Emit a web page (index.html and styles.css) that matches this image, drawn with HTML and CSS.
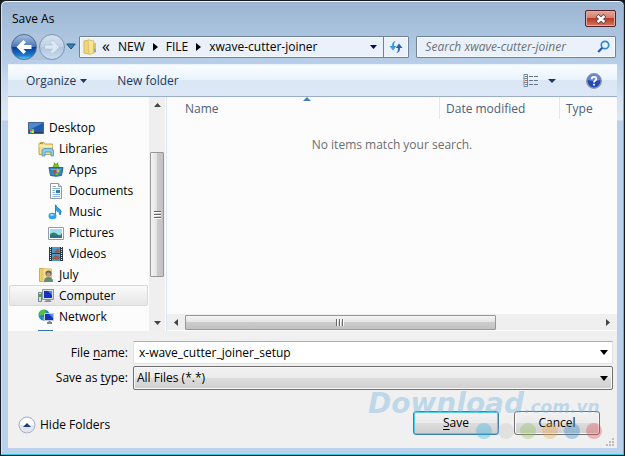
FILE: index.html
```html
<!DOCTYPE html>
<html lang="en">
<head>
  <meta charset="UTF-8" />
  <meta name="viewport" content="width=device-width, initial-scale=1.0" />
  <title>Save As</title>
  <link rel="stylesheet" href="styles.css">
</head>
<body>
  <form class="dialog" onsubmit="return false;">
    <header class="titlebar">
      <h1>Save As</h1>
      <button class="close" type="button" aria-label="Close">
        <svg width="12" height="10" viewBox="0 0 12 10"><path d="M2 1.500 10 8.500M10 1.500 2 8.500" stroke="#5b4650" stroke-width="4.200"/><path d="M2.500 2 9.500 8M9.500 2 2.500 8" stroke="#fff" stroke-width="2.400"/></svg>
      </button>
    </header>

    <nav class="navbar">
      <div class="travel">
        <button class="round back" type="button" aria-label="Back">
          <svg width="16" height="16" viewBox="0 0 16 16"><path d="M7.500 1 .5 8 7.500 15 10 12.700 7.500 10H15.500V6H7.500L10 3.300z" fill="#fff"/></svg>
        </button>
        <button class="round forward" type="button" aria-label="Forward">
          <svg width="16" height="16" viewBox="0 0 16 16"><path d="M8.500 1 15.500 8 8.500 15 6 12.700 8.500 10H.5V6H8.500L6 3.300z" fill="#dce8f3" stroke="#a9bfd4" stroke-width=".6"/></svg>
        </button>
      </div>
      <button class="plain recent" type="button" aria-label="Recent pages">
        <svg width="10" height="7" viewBox="0 0 10 7"><path d="M.8 1H9.200L5 6z" fill="#2f87b5" stroke="#1c4c78"/></svg>
      </button>
      <div class="address">
        <svg class="folder" width="14" height="16" viewBox="0 0 14 16"><path d="M1 2 6 1V15L1 14z" fill="#f0d475" stroke="#d8b860"/><path d="M5 1 11 2V14L6 15.500z" fill="#f6e394" stroke="#dfc56c"/><path d="M10 4H13V13L10 14.500z" fill="#e5c05a"/><path d="M12 10V13" stroke="#4fb2ea" stroke-width="1.500"/></svg>
        <span class="crumb-more">«</span>
        <a href="#">NEW</a>
        <svg class="chevron" width="5" height="8" viewBox="0 0 5 8"><path d="M0 0 5 4 0 8z"/></svg>
        <a href="#">FILE</a>
        <svg class="chevron" width="5" height="8" viewBox="0 0 5 8"><path d="M0 0 5 4 0 8z"/></svg>
        <a href="#">xwave-cutter-joiner</a>
        <button class="plain history" type="button" aria-label="Previous locations">
          <svg width="7" height="4" viewBox="0 0 7 4"><path d="M0 0H7L3.500 4z" fill="#000060"/></svg>
        </button>
        <button class="plain refresh" type="button" aria-label="Refresh">
          <svg width="14" height="14" viewBox="0 0 14 14"><path d="M6.500 1Q3 1.500 3 6H.5L4 10.500 7.300 6H5Q4.500 3 6.500 1z" fill="#3a9bd8"/><path d="M7.500 13Q11 12.500 11 8H13.500L10 3.500 6.700 8H9Q9.500 11 7.500 13z" fill="#2b62b2"/></svg>
        </button>
      </div>
      <div class="search">
        <input type="text" placeholder="Search xwave-cutter-joiner" aria-label="Search xwave-cutter-joiner" />
        <svg width="13" height="13" viewBox="0 0 13 13"><circle cx="8" cy="5" r="3.700" fill="#e4f3fc" stroke="#3089cd" stroke-width="1.700"/><path d="M5.300 7.700 1.200 12" stroke="#285aa8" stroke-width="2.200"/></svg>
      </div>
    </nav>

    <div class="toolbar">
      <button class="plain" type="button">Organize <svg width="7" height="4" viewBox="0 0 7 4"><path d="M0 0H7L3.500 4z" fill="#1e395b"/></svg></button>
      <button class="plain new-folder" type="button">New folder</button>
      <button class="plain views" type="button" aria-label="Change your view">
        <svg width="16" height="13" viewBox="0 0 16 13"><path d="M1 .5H4.500V12.500H1zM1 4.500H4.500M1 8.500H4.500" fill="#fff" stroke="#7a8595"/><path d="M2 2.500H4M2 10.500H4" stroke="#4a80c0"/><path d="M2 6.500H4" stroke="#d0572d"/><path d="M6 2.500H10M11 2.500H15M6 6.500H10M11 6.500H15M6 10.500H10M11 10.500H15" stroke="#65768e"/></svg>
        <svg width="8" height="4" viewBox="0 0 8 4"><path d="M0 0H8L4 4z" fill="#1e395b"/></svg>
      </button>
      <button class="plain" type="button" aria-label="Help">
        <svg width="16" height="16" viewBox="0 0 16 16"><circle cx="8" cy="8" r="7.200" fill="#2349b8" stroke="#8c929e" stroke-width="1.500"/><path d="M2 7A6 6 0 0 1 14 7Q8 9 2 7z" fill="#6688dd"/><path d="M5.700 6.200Q5.800 3.900 8 3.900 10.300 3.900 10.300 6 10.300 7.100 8.800 7.900 8 8.400 8 9.500M8 10.700V12.500" fill="none" stroke="#fff" stroke-width="1.800"/></svg>
      </button>
    </div>

    <main class="browser">
      <ul class="tree">
        <li><a href="#">
          <svg width="16" height="16" viewBox="0 0 16 16"><path d="M.5 2.500H15.500V13.500H.5z" fill="#235ba8" stroke="#42658f"/><path d="M1 3H15L1 10z" fill="#4f89d0"/><path d="M1 12.500H15" stroke="#243b60"/><path d="M2 9H4V11H2z" fill="#e85c3b"/><path d="M4 9H6V11H4z" fill="#79c94c"/><path d="M2 11H4V13H2z" fill="#53c5f2"/><path d="M4 11H6V13H4z" fill="#f3d14f"/></svg>
          Desktop</a></li>
        <li class="level-1"><a href="#">
          <svg width="16" height="16" viewBox="0 0 16 16"><path d="M1 2.500 2 1.500H6L7 3H14.500V13.500H1z" fill="#f3df91" stroke="#c6a550"/><path d="M1 5H15" stroke="#fff4c4"/><path d="M2 2.500H5" stroke="#5eb946"/><path d="M4 15V9L6 7.500H13.500L15.500 9V15H13V11H7V15z" fill="#87cced" stroke="#4a96c4" stroke-width=".8"/></svg>
          Libraries</a></li>
        <li class="level-2"><a href="#">
          <svg width="16" height="16" viewBox="0 0 16 16"><path d="M4.500 6Q4.500 1.500 8 1.500T11.500 6z" fill="#8cbb2d"/><path d="M6 .5 7 3M10 .5 9 3" stroke="#55821e"/><path d="M1 5.500H15L13.500 13.500Q8 15 2.500 13.500z" fill="#3288be" stroke="#1f699e"/><path d="M3 7.500H13" stroke="#62b0d8"/><circle cx="7" cy="9.500" r="1.800" fill="#c84432"/><circle cx="10" cy="9" r="1.500" fill="#f0c23d"/><circle cx="9" cy="12" r="1.300" fill="#82b43b"/></svg>
          Apps</a></li>
        <li class="level-2"><a href="#">
          <svg width="16" height="16" viewBox="0 0 16 16"><path d="M2.500.5H10.500L13.500 3.500V15.500H2.500z" fill="#fff" stroke="#8c9bab"/><path d="M10.500.5V3.500H13.500" fill="#dce7f0" stroke="#8c9bab"/><path d="M4.500 3.500H8M4.500 5.500H12M4.500 7.500H7M4.500 9.500H7M4.500 11.500H12M4.500 13.500H12" stroke="#8db4d5"/><path d="M8 7H12V10H8z" fill="#247fbd"/></svg>
          Documents</a></li>
        <li class="level-2"><a href="#">
          <svg width="16" height="16" viewBox="0 0 16 16"><path d="M7.500 12V.8Q8.500 4 11.500 5 14.500 7 12 11 12 7.500 8.500 6.500" fill="#3ba2dd" stroke="#2783c5"/><ellipse cx="4.500" cy="12" rx="4" ry="3.300" fill="#2fa3e4"/><ellipse cx="4" cy="11" rx="2" ry="1" fill="#9ddcf8"/></svg>
          Music</a></li>
        <li class="level-2"><a href="#">
          <svg width="16" height="16" viewBox="0 0 16 16"><path d="M.5 2.500H15.500V14.500H.5z" fill="#fff" stroke="#919eaa"/><path d="M2 4H14V13H2z" fill="#9edaf1"/><path d="M2 9Q6 6 9 9T14 8V13H2z" fill="#34835a"/><path d="M2 11Q7 8 14 12V13H2z" fill="#2a718d"/></svg>
          Pictures</a></li>
        <li class="level-2"><a href="#">
          <svg width="16" height="16" viewBox="0 0 16 16"><path d="M1 1H15V15H1z" fill="#273845"/><path d="M4 1H12V7H4zM4 8H12V15H4z" fill="#4d9cc7"/><path d="M4 3 7 5 10 2 12 6 8 7zM4 13 7 9 12 11 10 14z" fill="#9a5a49"/><path d="M2.500 1V15M13.500 1V15" stroke="#e5eef4" stroke-dasharray="1 1"/></svg>
          Videos</a></li>
        <li class="level-1"><a href="#">
          <svg width="16" height="16" viewBox="0 0 16 16"><path d="M1.500 1.500H6V14.500H1.500z" fill="#ebcc70" stroke="#d0ac50"/><path d="M5 1.500 13.500 2V14L5 15z" fill="#f4df96" stroke="#dfc476"/><circle cx="10.500" cy="6.500" r="3" fill="#6a6454"/><circle cx="10.500" cy="7.500" r="2" fill="#c49c7b"/><path d="M6 15Q6 10 10.500 10T15 15z" fill="#668b77"/></svg>
          July</a></li>
        <li class="level-1 selected"><a href="#">
          <svg width="16" height="16" viewBox="0 0 16 16"><path d="M.5 4.500H3.500V13.500H.5z" fill="#d4dbdf" stroke="#78858e"/><path d="M2 6V9" stroke="#42a648" stroke-width="2"/><path d="M4.500 1.500H15.500V11.500H4.500z" fill="#d9dfe5" stroke="#8b959f"/><path d="M6 3H14V10H6z" fill="#1631bd"/><path d="M10 3H14V7z" fill="#5d82ed"/><path d="M8 12H12L14 14H6z" fill="#89949e"/></svg>
          Computer</a></li>
        <li class="level-1"><a href="#">
          <svg width="16" height="16" viewBox="0 0 16 16"><circle cx="6" cy="6" r="5.500" fill="#2582c5"/><path d="M2 2Q7-1 8 3L5 6 1 7zM4 8 8 9 6 12z" fill="#54bd47"/><path d="M6.500 4.500H15.500V11.500H6.500z" fill="#1631bd" stroke="#c2ccd6"/><path d="M11 5H15V9z" fill="#688aec"/><path d="M9 14H14M11.500 12V14" stroke="#788694" stroke-width="2"/></svg>
          Network</a></li>
        <li class="level-1"><a href="#" aria-label="Control Panel">
          <svg width="16" height="16" viewBox="0 0 16 16"><path d="M0 0H15V14H0z" fill="#3475af"/></svg>
        </a></li>
      </ul>
      <div class="scroll scroll-y">
        <svg width="7" height="4" viewBox="0 0 7 4"><path d="M0 4H7L3.500 0z"/></svg>
        <div class="track"><div class="thumb"><i></i><i></i><i></i></div></div>
        <svg width="7" height="4" viewBox="0 0 7 4"><path d="M0 0H7L3.500 4z"/></svg>
      </div>
      <section class="files">
        <div class="columns">
          <span class="col-name">Name <svg class="sort" width="8" height="4" viewBox="0 0 8 4"><path d="M0 4H8L4 0z" fill="#4583a8"/></svg></span>
          <span class="col-date">Date modified</span>
          <span class="col-type">Type</span>
        </div>
        <p class="empty">No items match your search.</p>
        <div class="scroll scroll-x">
          <svg width="4" height="7" viewBox="0 0 4 7"><path d="M4 0V7L0 3.500z"/></svg>
          <div class="track"><div class="thumb"><i></i><i></i><i></i></div></div>
          <svg width="4" height="7" viewBox="0 0 4 7"><path d="M0 0V7L4 3.500z"/></svg>
        </div>
      </section>
    </main>

    <footer class="footer">
      <div class="field">
        <label for="fileName">File <u>n</u>ame:</label>
        <div class="combo">
          <input type="text" id="fileName" value="x-wave_cutter_joiner_setup" />
          <svg width="8" height="5" viewBox="0 0 8 5"><path d="M0 0H8L4 5z"/></svg>
        </div>
      </div>
      <div class="field">
        <label for="fileType">Save as <u>t</u>ype:</label>
        <div class="combo combo-type">
          <select id="fileType"><option>All Files (*.*)</option></select>
          <svg width="8" height="5" viewBox="0 0 8 5"><path d="M0 0H8L4 5z"/></svg>
        </div>
      </div>
      <div class="actions">
        <button class="plain hide" type="button">
          <svg width="18" height="18" viewBox="0 0 18 18"><circle cx="9" cy="9" r="8" fill="#e0e6f0" stroke="#a9b3c5"/><path d="M2 9A7 7 0 0 1 16 9z" fill="#fff"/><path d="M5 11H13L9 7z" fill="#1f3d78"/></svg>
          Hide Folders
        </button>
        <button class="btn btn-save" type="submit"><u>S</u>ave</button>
        <button class="btn" type="button">Cancel</button>
        <div class="watermark">
          <div class="brand">Download<small>.com.vn</small></div>
          <div class="dots"><i class="cyan"></i><i class="grey"></i><i class="green"></i><i class="orange"></i><i class="blue"></i><i class="red"></i></div>
        </div>
      </div>
      <svg class="grip" width="8" height="8" viewBox="0 0 8 8"><path d="M6 0H8V2H6zM3 3H5V5H3zM6 3H8V5H6zM0 6H2V8H0zM3 6H5V8H3zM6 6H8V8H6z" fill="#bcbcbc"/></svg>
    </footer>
  </form>
</body>
</html>
```

FILE: styles.css
```css
:root {
  --glass: #b9d1ea;
  --text: #000;
  --navy: #1e395b;
  --pane: #fcfcfc;
  --footer: #f0f0f0;
}
* {
  box-sizing: border-box;
}
body {
  margin: 0;
  background: #16191d;
  font-family: 'Open Sans', 'Noto Sans', sans-serif;
  font-size: 12px;
  line-height: 16px;
  color: var(--text);
}
button, input, select {
  font: inherit;
  color: inherit;
  margin: 0;
}
a {
  color: inherit;
  text-decoration: none;
}
svg {
  flex: none;
  display: block;
}
.plain {
  display: flex;
  align-items: center;
  padding: 0;
  border: none;
  background: none;
}
.dialog {
  display: flex;
  flex-direction: column;
  height: 100vh;
  padding: 0 7px 7px;
  border: 1px solid #16191d;
  border-radius: 6px 6px 0 0;
  box-shadow: inset 0 1px #eef5fb, inset -1px -1px #2fcbe9, inset 1px 0 #d5e6f6;
  background: linear-gradient(#9bb5d2, #b7cee8 60px, #d5e3f2 100px, #dce8f5 119px, var(--glass) 120px);
}

/* Title and navigation */
.titlebar {
  flex: none;
  display: flex;
  align-items: flex-start;
  justify-content: space-between;
  height: 34px;
  padding: 9px 1px 0 4px;
}
.titlebar h1 {
  margin: 0;
  font-size: 12px;
  font-weight: 400;
  line-height: 18px;
}
.close {
  display: flex;
  align-items: center;
  justify-content: center;
  width: 31px;
  height: 17px;
  padding: 0;
  border: 1px solid #54222b;
  border-radius: 2px;
  box-shadow: inset 0 0 0 1px #e3aaa0;
  background: linear-gradient(#e4a497, #d37f70 50%, #b93a25 50%, #d37960);
}
.navbar {
  flex: none;
  display: flex;
  align-items: center;
  height: 23px;
  margin-bottom: 6px;
  padding: 0 1px 0 3px;
}
.travel {
  display: flex;
  gap: 2px;
  border-radius: 13px;
  background: #aec5dd;
}
.round {
  display: flex;
  align-items: center;
  justify-content: center;
  width: 26px;
  height: 26px;
  padding: 0;
  border: 1px solid #50698d;
  border-radius: 50%;
}
.back {
  background: linear-gradient(#a8bfe0, #4d76b8 48%, #0a3a92 50%, #1a7bd4 85%, #5ccdf5);
}
.forward {
  border-color: #7f95b0;
  background: linear-gradient(#d4e1ef, #c0d2e5 48%, #adc4db 50%, #ccdeef);
}
.recent {
  margin: 0 3px 0 1px;
}
.address, .search {
  display: flex;
  align-items: center;
  height: 22px;
  border: 1px solid #6f8298;
  border-radius: 1px;
  box-shadow: inset 0 0 0 1px #f8fbfe;
  background: #eaf1fa;
}
.address {
  flex: 1;
}
.folder {
  margin-left: 3px;
}
.crumb-more {
  margin: 0 8px 2px 5px;
  font-size: 16px;
}
.chevron {
  margin: 0 8px;
}
.history {
  margin: 0 6px 0 auto;
}
.refresh {
  align-self: stretch;
  justify-content: center;
  width: 25px;
  border-left: 1px solid #6f8298;
}
.search {
  width: 33%;
  margin-left: 7px;
  padding-right: 5px;
}
.search input {
  flex: 1;
  min-width: 0;
  padding: 0 0 0 8px;
  border: none;
  outline: none;
  background: none;
}
.search input::placeholder {
  color: #6d7176;
  font-style: italic;
  opacity: 1;
}

/* Toolbar */
.toolbar {
  flex: none;
  display: flex;
  align-items: center;
  height: 33px;
  padding: 0 15px 0 18px;
  border-top: 1px solid #e9f2fb;
  border-bottom: 1px solid #9cadc9;
  background: linear-gradient(#fafdff, #e9f3fd 48%, #dce7f5 50%, #dde8f6);
  color: var(--navy);
}
.toolbar .plain {
  gap: 4px;
}
.new-folder {
  margin-left: 30px;
}
.toolbar .views {
  gap: 9px;
  margin: 0 30px 0 auto;
}

/* Folder tree and file list */
.browser {
  flex: 1;
  display: flex;
  min-height: 0;
  background: var(--pane);
}
.tree {
  width: 141px;
  margin: 0;
  padding: 20px 1px 0;
  overflow: hidden;
  list-style: none;
}
.tree li {
  height: 21px;
  padding-left: 18px;
  border: 1px solid transparent;
  border-radius: 2px;
}
.tree a {
  display: flex;
  align-items: center;
  gap: 5px;
  height: 19px;
}
.tree .level-1 {
  padding-left: 28px;
}
.tree .level-2 {
  padding-left: 38px;
}
.tree .selected {
  border-color: #d9d9d9;
  background: linear-gradient(#fafafa, #e6e6e6);
}
.scroll {
  display: flex;
  align-items: center;
  background: #efefef;
  fill: #444;
}
.scroll .track {
  flex: 1;
}
.thumb {
  display: flex;
  align-items: center;
  justify-content: center;
  gap: 1px;
  border: 1px solid #979797;
  border-radius: 1px;
}
.scroll-y {
  flex-direction: column;
  width: 16px;
  padding: 6px 1px;
}
.scroll-y .track {
  width: 14px;
  padding-top: 45px;
}
.scroll-y .thumb {
  flex-direction: column;
  height: 125px;
  background: linear-gradient(to right, #f5f5f5, #e2e2e2 50%, #cbcbcb 50%, #c2c2c4);
}
.scroll-y .thumb i {
  width: 7px;
  height: 2px;
  border-bottom: 1px solid #fff;
  background: #666;
}
.files {
  flex: 1;
  display: flex;
  flex-direction: column;
  min-width: 0;
  margin-left: 1px;
  border-left: 1px solid #d9e6f5;
}
.columns {
  display: flex;
  height: 22px;
  line-height: 24px;
  color: #4c607a;
}
.columns span {
  padding-left: 6px;
  border-left: 1px solid #e0e9f3;
}
.columns .col-name {
  display: grid;
  grid-template-columns: 1fr auto 1fr;
  flex: 1;
  padding: 0 0 0 18px;
  border: none;
}
.col-name .sort {
  margin-right: 10px;
}
.col-date {
  width: 120px;
}
.col-type {
  width: 58px;
}
.empty {
  flex: 1;
  margin: 18px 0 0;
  text-align: center;
  color: #6d6d6d;
}
.scroll-x {
  height: 16px;
  margin-bottom: 1px;
  padding: 0 7px;
}
.scroll-x .track {
  padding: 0 7px;
}
.scroll-x .thumb {
  width: 75%;
  height: 15px;
  background: linear-gradient(#f5f5f5, #e2e2e2 50%, #cbcbcb 50%, #c2c2c4);
}
.scroll-x .thumb i {
  width: 2px;
  height: 7px;
  border-right: 1px solid #fff;
  background: #666;
}

/* File name, type and buttons */
.footer {
  flex: none;
  position: relative;
  height: 117px;
  padding: 10px 4px 0 6px;
  background: var(--footer);
}
.field {
  display: flex;
  align-items: center;
  gap: 5px;
  margin-bottom: 2px;
}
.field label {
  width: 114px;
  text-align: right;
}
u {
  text-underline-offset: 2px;
}
.combo {
  flex: 1;
  display: flex;
  align-items: center;
  height: 23px;
  padding-right: 4px;
  border: 1px solid #e2e3ea;
  border-top-color: #abadb3;
  background: #fff;
}
.combo input, .combo select {
  flex: 1;
  min-width: 0;
  height: 20px;
  padding: 0 5px;
  border: none;
  outline: none;
  background: none;
  appearance: none;
}
.combo-type {
  height: 24px;
  border: 1px solid #707070;
  border-radius: 2px;
  box-shadow: inset 0 0 0 1px #f8f8f8;
  background: linear-gradient(#f2f2f2, #ebebeb 50%, #dddddd 50%, #cfcfcf);
}
.combo select {
  padding: 0 3px;
}
.actions {
  position: relative;
  display: flex;
  align-items: center;
  gap: 15px;
  margin-top: 21px;
  padding-right: 13px;
}
.hide {
  gap: 4px;
  margin: 4px auto 0 4px;
}
.btn {
  width: 86px;
  height: 24px;
  padding: 0;
  border: 1px solid #707070;
  border-radius: 3px;
  box-shadow: inset 0 0 0 1px #fbfbfb;
  background: linear-gradient(#f2f2f2, #ebebeb 50%, #dddddd 50%, #cfcfcf);
}
.btn-save {
  border-color: #3c7fb1;
  box-shadow: inset 0 0 0 1px #48d0f5;
}
.watermark {
  position: absolute;
  right: 11px;
  top: -18px;
  width: 234px;
  pointer-events: none;
}
.brand {
  font: italic bold 28px/22px 'DejaVu Sans', sans-serif;
  color: rgba(126, 185, 224, 0.45);
  white-space: nowrap;
}
.brand small {
  font-size: 17px;
}
.dots {
  display: flex;
  justify-content: flex-end;
  gap: 6px;
  padding-top: 5px;
}
.dots i {
  width: 16px;
  height: 16px;
  border-radius: 50%;
  opacity: 0.35;
}
.cyan { background: #2bb5e8; }
.grey { background: #c4c4c4; }
.green { background: #8fc255; }
.orange { background: #f0a33f; }
.blue { background: #2f86c9; }
.red { background: #e34750; }
.grip {
  position: absolute;
  right: 3px;
  bottom: 2px;
}
```
